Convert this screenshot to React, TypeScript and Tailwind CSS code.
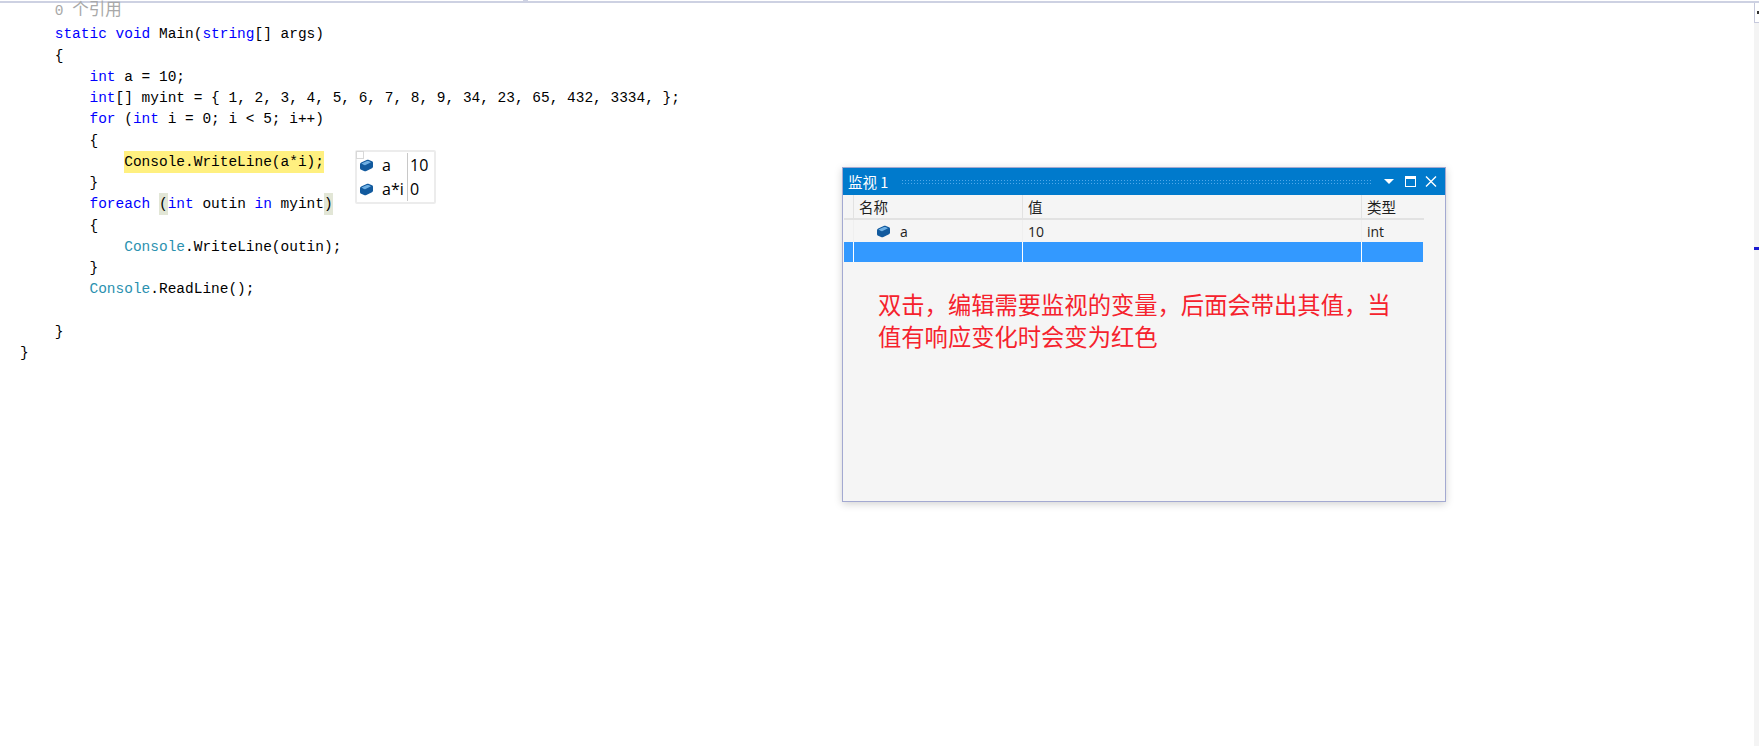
const kw = "text-[#0000ff]";
const type = "text-[#2b91af]";

function Cube({ className = "" }: { className?: string }) {
  return (
    <svg viewBox="0 0 15 13" className={className}>
      <path d="M1 5.2C1 4.4 1.5 3.8 2.2 3.4L7.6 1C8.4.7 9.2.7 10 1L13 2.2C13.7 2.5 14 3 14 3.7V7.6C14 8.3 13.7 8.8 13 9.2L7.4 12C6.6 12.3 5.8 12.3 5 12L2.2 10.8C1.5 10.4 1 9.9 1 9.2Z" fill="#125a9e" />
      <path d="M2.4 4.6 8 2.1C8.5 1.9 9 1.9 9.5 2.1L12 3.2 6.6 5.9C6 6.2 5.5 6.2 5 6Z" fill="#6fb0e4" />
    </svg>
  );
}

function CodeLine({ indent = 0, children }: { indent?: number; children?: React.ReactNode }) {
  const pad = ["pl-0", "pl-[34.75px]", "pl-[69.5px]", "pl-[104.25px]"][indent];
  return <div className={`h-[21.27px] whitespace-pre ${pad}`}>{children}</div>;
}

function Code() {
  return (
    <div className="pl-[20px] font-['Liberation_Mono','Noto_Sans_CJK_SC',monospace] text-[14.48px] leading-[21.27px] text-black">
      <CodeLine indent={1}>
        <span className="flex h-[17px] items-center leading-none text-[#a8a8a8]">
          <span>0 </span>
          <span className="text-[16.5px]">个引用</span>
        </span>
      </CodeLine>
      <CodeLine indent={1}>
        <span className={kw}>static void</span> Main(<span className={kw}>string</span>[] args)
      </CodeLine>
      <CodeLine indent={1}>{"{"}</CodeLine>
      <CodeLine indent={2}>
        <span className={kw}>int</span> a = 10;
      </CodeLine>
      <CodeLine indent={2}>
        <span className={kw}>int</span>[] myint = {"{"} 1, 2, 3, 4, 5, 6, 7, 8, 9, 34, 23, 65, 432, 3334, {"};"}
      </CodeLine>
      <CodeLine indent={2}>
        <span className={kw}>for</span> (<span className={kw}>int</span> i = 0; i &lt; 5; i++)
      </CodeLine>
      <CodeLine indent={2}>{"{"}</CodeLine>
      <CodeLine indent={3}>
        <span className="bg-[#fff080] py-[3px]">Console.WriteLine(a*i);</span>
      </CodeLine>
      <CodeLine indent={2}>{"}"}</CodeLine>
      <CodeLine indent={2}>
        <span className={kw}>foreach</span> <span className="bg-[#e2e6d6] py-[3px]">(</span>
        <span className={kw}>int</span> outin <span className={kw}>in</span> myint
        <span className="bg-[#e2e6d6] py-[3px]">)</span>
      </CodeLine>
      <CodeLine indent={2}>{"{"}</CodeLine>
      <CodeLine indent={3}>
        <span className={type}>Console</span>.WriteLine(outin);
      </CodeLine>
      <CodeLine indent={2}>{"}"}</CodeLine>
      <CodeLine indent={2}>
        <span className={type}>Console</span>.ReadLine();
      </CodeLine>
      <CodeLine />
      <CodeLine indent={1}>{"}"}</CodeLine>
      <CodeLine>{"}"}</CodeLine>
    </div>
  );
}

function DataTip() {
  return (
    <div className="absolute left-[355px] top-[150px] flex h-[54px] w-[81px] flex-col justify-center rounded-[2px] border-2 border-[#ececec] bg-white font-['Open_Sans','Noto_Sans',sans-serif] text-[16px] leading-[24px] text-black">
      <div className="absolute -left-[1px] -top-[1px] h-[8px] w-[8px] border border-[#d8d8d8] bg-white" />
      <div className="flex h-[24px] items-center">
        <Cube className="ml-[2px] h-[13px] w-[15px]" />
        <span className="ml-[8px] w-[25px]">a</span>
        <span className="border-l border-[#c8c8c8] pl-[2px]">10</span>
      </div>
      <div className="flex h-[24px] items-center">
        <Cube className="ml-[2px] h-[13px] w-[15px]" />
        <span className="ml-[8px] w-[25px]">a*i</span>
        <span className="border-l border-[#c8c8c8] pl-[2px]">0</span>
      </div>
    </div>
  );
}

function WatchWindow() {
  return (
    <div className="absolute left-[842px] top-[167px] h-[335px] w-[604px] border border-[#a3a9d1] bg-[#f5f5f5] font-['Open_Sans','Noto_Sans_CJK_SC',sans-serif] text-[14px] text-[#1e1e1e] shadow-[0_2px_8px_rgba(0,0,0,0.18)]">
      <div className="flex h-[27px] items-center bg-[#007acc] pl-[5px] text-white">
        <span className="w-[53px] font-['Noto_Sans_CJK_SC',sans-serif] text-[14.5px]">监视 1</span>
        <div className="h-[6px] w-[472px] bg-[radial-gradient(circle,#4fa8ea_1px,transparent_1px)] bg-[length:3px_3px]" />
        <svg viewBox="0 0 10 5" className="ml-[11px] h-[5px] w-[10px]">
          <path d="M0 0H10L5 5Z" fill="#fff" />
        </svg>
        <svg viewBox="0 0 11 11" className="ml-[11px] h-[11px] w-[11px]">
          <path d="M0 0H11V11H0Z M1 3V10H10V3Z" fill="#fff" fillRule="evenodd" />
        </svg>
        <svg viewBox="0 0 12 11" className="ml-[9px] h-[11px] w-[12px]">
          <path d="M1 .5 11 10.5M11 .5 1 10.5" stroke="#fff" strokeWidth="1.4" fill="none" />
        </svg>
      </div>

      <div className="ml-[1px] w-[580px]">
        <div className="flex h-[25px] items-center border-b-2 border-[#e2e2e2] font-['Noto_Sans_CJK_SC',sans-serif] text-[14.5px]">
          <div className="h-full w-[10px] border-r border-[#e2e2e2]" />
          <div className="flex h-full w-[169px] items-center border-r border-[#e2e2e2] pl-[5px]">名称</div>
          <div className="flex h-full w-[339px] items-center border-r border-[#e2e2e2] pl-[5px]">值</div>
          <div className="flex h-full items-center pl-[5px]">类型</div>
        </div>
        <div className="flex h-[22px] items-center">
          <div className="h-full w-[10px] border-r border-[#efefef]" />
          <div className="flex h-full w-[169px] items-center border-r border-[#efefef] pl-[22px]">
            <Cube className="h-[13px] w-[15px]" />
            <span className="ml-[9px]">a</span>
          </div>
          <div className="flex h-full w-[339px] items-center border-r border-[#efefef] pl-[5px]">10</div>
          <div className="pl-[5px]">int</div>
        </div>
        <div className="flex h-[20px] w-[579px] bg-[#3399ff]">
          <div className="w-[10px] border-r border-white" />
          <div className="w-[169px] border-r border-white" />
          <div className="w-[339px] border-r border-white" />
        </div>
      </div>

      <p className="ml-[35px] mt-[26px] w-[520px] font-['Noto_Sans_CJK_SC',sans-serif] text-[23.3px] leading-[32px] text-[#f5222d]">
        双击，编辑需要监视的变量，后面会带出其值，当值有响应变化时会变为红色
      </p>
    </div>
  );
}

export default function App() {
  return (
    <div className="relative h-[746px] w-[1759px] overflow-hidden bg-white">
      <div className="absolute left-[523px] top-0 h-[1px] w-[5px] bg-[#cdd1e2]" />
      <div className="mt-[1px] h-[2px] bg-[#cdd1e2]" />
      <div className="flex h-[743px]">
        <div className="flex-1">
          <Code />
        </div>
        <div className="relative w-[5px] bg-[#f4f4f4]">
          <div className="flex h-[20px] items-center border-b border-l border-[#c6c9dc] bg-white pl-[2px]">
            <div className="h-[3px] w-full bg-[#333333]" />
          </div>
          <div className="absolute left-0 top-[244px] h-[3px] w-full bg-[#1a1ad0]" />
        </div>
      </div>
      <DataTip />
      <WatchWindow />
    </div>
  );
}
